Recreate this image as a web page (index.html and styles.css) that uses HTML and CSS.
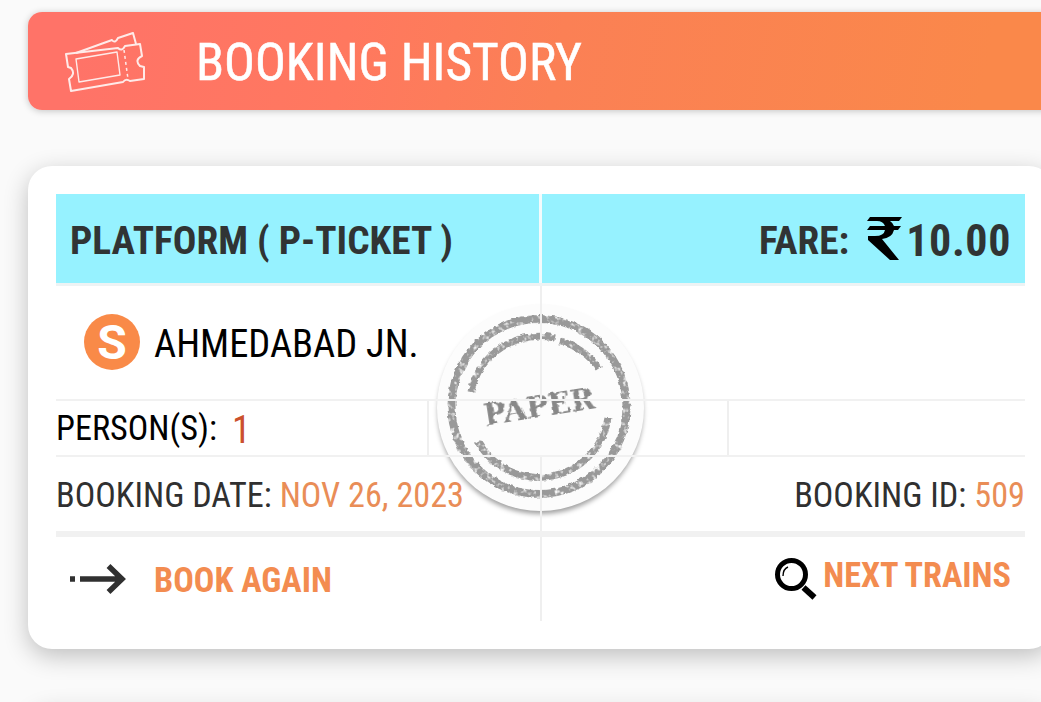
FILE: index.html
```
<!DOCTYPE html>
<html lang="en">
<head>
<meta charset="utf-8">
<title>Booking History</title>
<link rel="stylesheet" href="styles.css">
</head>
<body>
<main class="page">
  <header class="banner">
    <svg class="ticket-icon" width="84" height="64" viewBox="0 0 84 64" fill="none" stroke="currentColor" stroke-width="2" stroke-linejoin="round">
      <path d="M14 21 50 8q3 4 6-2L71 1l3 11"/>
      <path d="M4 22 56 16q4 4 7-2L78 12l2 12q-8 4-2 10l4 1 0 12-14 2q-4-3-7 1L9 59 7 47q7-5 2-11l-3-1Z"/>
      <path d="m14 27 41-7 3 23-41 7Z" stroke-width="1.400"/>
      <path d="m62 18 4 29" stroke-dasharray="3 3" stroke-width="1.500"/>
    </svg>
    <h1 class="banner-title"><span class="t">BOOKING HISTORY</span></h1>
  </header>

  <section class="card">
    <div class="stamp">
      <svg width="208" height="208" viewBox="0 0 208 208">
        <defs>
          <filter id="rough" x="-5%" y="-5%" width="110%" height="110%">
            <feTurbulence type="fractalNoise" baseFrequency="0.22" numOctaves="2" seed="8" result="n"/>
            <feDisplacementMap in="SourceGraphic" in2="n" scale="4" xChannelSelector="R" yChannelSelector="G" result="d"/>
            <feColorMatrix in="n" type="matrix" values="0 0 0 0 0  0 0 0 0 0  0 0 0 0 0  0 3 0 0 -0.45" result="m"/>
            <feComposite in="d" in2="m" operator="in"/>
            <feGaussianBlur stdDeviation="0.7"/>
          </filter>
          <filter id="rough-text" x="-5%" y="-10%" width="110%" height="120%">
            <feTurbulence type="fractalNoise" baseFrequency="0.2" numOctaves="1" seed="3" result="n"/>
            <feDisplacementMap in="SourceGraphic" in2="n" scale="4" xChannelSelector="R" yChannelSelector="G"/>
            <feGaussianBlur stdDeviation="0.7"/>
          </filter>
        </defs>
        <g filter="url(#rough)" fill="none" stroke="#999">
          <circle cx="102" cy="102.500" r="87.500" stroke-width="8"/>
          <path d="M34 88A70 70 0 0 1 118 34M123 37A70 70 0 0 1 162 65M171 114A70 70 0 0 1 41 138" stroke-width="7"/>
        </g>
        <text class="stamp-text" filter="url(#rough-text)" x="102" y="113" transform="rotate(-9 102 101)" text-anchor="middle" textLength="112" lengthAdjust="spacingAndGlyphs">PAPER</text>
      </svg>
    </div>

    <div class="ticket">
      <div class="row row-head">
        <div class="cell"><span class="t title">PLATFORM ( P-TICKET )</span></div>
        <div class="cell cell-end">
          <span class="t fare-label">FARE:</span>
          <svg class="rupee" width="35" height="43" viewBox="0 0 35 43">
            <path d="M3 0H35L32 4H23Q26 6 27 9H34L31 13H27Q25 21 15 22L32 43H23L1 23V19H8Q17 19 18 13H0L3 9H18Q16 4 10 4H0Z"/>
          </svg>
          <span class="t fare">10.00</span>
        </div>
      </div>
      <div class="row row-station">
        <div class="cell"><span class="badge">S</span><span class="t station">AHMEDABAD JN.</span></div>
        <div class="cell"></div>
      </div>
      <div class="row row-person">
        <div class="cell"><span class="t label">PERSON(S):</span><span class="t count">1</span></div>
        <div class="cell"></div>
        <div class="cell"></div>
      </div>
      <div class="row row-booking">
        <div class="cell"><span class="t date-label">BOOKING DATE:</span><span class="t date">NOV 26, 2023</span></div>
        <div class="cell cell-end"><span class="t id-label">BOOKING ID:</span><span class="t id">509</span></div>
      </div>
      <div class="row row-actions">
        <div class="cell">
          <svg class="arrow" width="57" height="30" viewBox="0 0 57 30" fill="none" stroke="#303030" stroke-width="5.500">
            <path d="M0 15H5M10 15H52M38.500 2 52 15 38.500 28"/>
          </svg>
          <span class="t action again">BOOK AGAIN</span>
        </div>
        <div class="cell cell-end">
          <svg class="search" width="43" height="43" viewBox="0 0 43 43" fill="none" stroke="#000">
            <circle cx="16.500" cy="16.500" r="14" stroke-width="5"/>
            <path d="M8 18Q8 11 13 9" stroke-width="1.400"/>
            <path d="m28.500 29.500 11 10" stroke-width="6"/>
          </svg>
          <span class="t action next">NEXT TRAINS</span>
        </div>
      </div>
    </div>
  </section>
  <section class="card card-next"></section>
</main>
</body>
</html>
```
FILE: styles.css
```
* { box-sizing: border-box; }
html { overflow: hidden; }
body {
  margin: 0;
  width: 1041px;
  height: 702px;
  overflow: hidden;
  background: #fafafa;
  font-family: "Roboto Condensed", Roboto, sans-serif;
  font-stretch: 75%;
}
.page { width: 1081px; height: 702px; overflow: hidden; padding: 12px 28px 0; }
.banner {
  display: flex;
  align-items: center;
  width: 1060px;
  height: 98px;
  padding-left: 34px;
  border-radius: 14px;
  color: #fff;
  background: linear-gradient(100deg, #ff7368 5%, #ff785f 30%, #fb8055 50%, #fa884a 90%);
  box-shadow: 0 1px 7px rgba(0, 0, 0, .22);
}
.ticket-icon { margin-top: 5px; opacity: .85; }
.banner-title { margin: 4px 0 0 50px; font-size: 51.4px; font-weight: 400; line-height: 60px; -webkit-text-stroke: .5px #fff; }
.t { white-space: pre; }
.card {
  position: relative;
  width: 1025px;
  height: 483px;
  margin-top: 56px;
  padding: 28px;
  border-radius: 24px;
  background: #fff;
  box-shadow: 0 7px 24px rgba(0, 0, 0, .24);
}
.card-next { height: 80px; margin-top: 56px; box-shadow: 0 7px 24px rgba(0, 0, 0, .18); }
.stamp {
  position: absolute;
  left: 409px;
  top: 138px;
  width: 207px;
  height: 207px;
  border-radius: 50%;
  background: #fcfcfc;
  box-shadow: 0 4px 5px -1px rgba(0, 0, 0, .38);
}
.stamp-text { font: bold 30px "DejaVu Serif", serif; fill: #888; }
.ticket { position: relative; width: 969px; }
.row { display: grid; grid-template-columns: 486px 483px; }
.cell { display: flex; align-items: center; border-right: 2px solid #efefef; }
.cell:last-child { border-right: 0; }
.cell-end { justify-content: flex-end; }
.row-head { height: 92px; border-bottom: 3px solid #edf3f4; }
.row-head .cell { background: #96f2ff; border-color: #f4fbfc; border-right-width: 3px; padding-top: 4px; }
.row-head .cell:last-child { border-right: 0; }
.row-head .cell:first-child { background-clip: padding-box; padding-left: 14px; }
.row-head .cell-end { padding-right: 14px; }
.title, .fare-label { font-size: 39.3px; font-weight: 700; color: #303434; }
.fare { margin-left: 4px; font-size: 44px; font-weight: 700; color: #303434; letter-spacing: .6px; }
.rupee { margin-left: 18px; margin-top: -5px; }
.row-station { height: 115px; border-bottom: 2px solid #f1f1f1; }
.badge {
  display: flex;
  align-items: center;
  justify-content: center;
  width: 56px;
  height: 56px;
  margin: -1px 0 0 28px;
  border-radius: 50%;
  background: #f98a48;
  color: #fff;
  font: 700 48px Roboto, sans-serif;
}
.station { margin: 2px 0 0 14px; font-size: 38.5px; color: #000; }
.row-person { height: 56px; grid-template-columns: 373px 300px 296px; border-bottom: 2px solid #f1f1f1; }
.label { font-size: 34.2px; }
.count { margin: 3px 0 0 15px; font-size: 38px; color: #cb512c; }
.row-booking { height: 80px; border-bottom: 6px solid #f1f1f1; }
.row-booking .cell { padding-top: 2px; }
.date-label, .id-label { font-size: 34.2px; color: #303030; }
.date, .id { margin-left: 8px; font-size: 34.2px; color: #e98d57; }
.row-actions { height: 84px; }
.row-actions .cell { align-items: flex-start; }
.arrow { margin: 27px 0 0 14px; }
.action { font-size: 34.2px; line-height: 40px; font-weight: 700; color: #f38c50; }
.again { margin: 23px 0 0 27px; }
.search { margin-top: 21px; }
.next { margin: 18px 14px 0 5px; }
```
